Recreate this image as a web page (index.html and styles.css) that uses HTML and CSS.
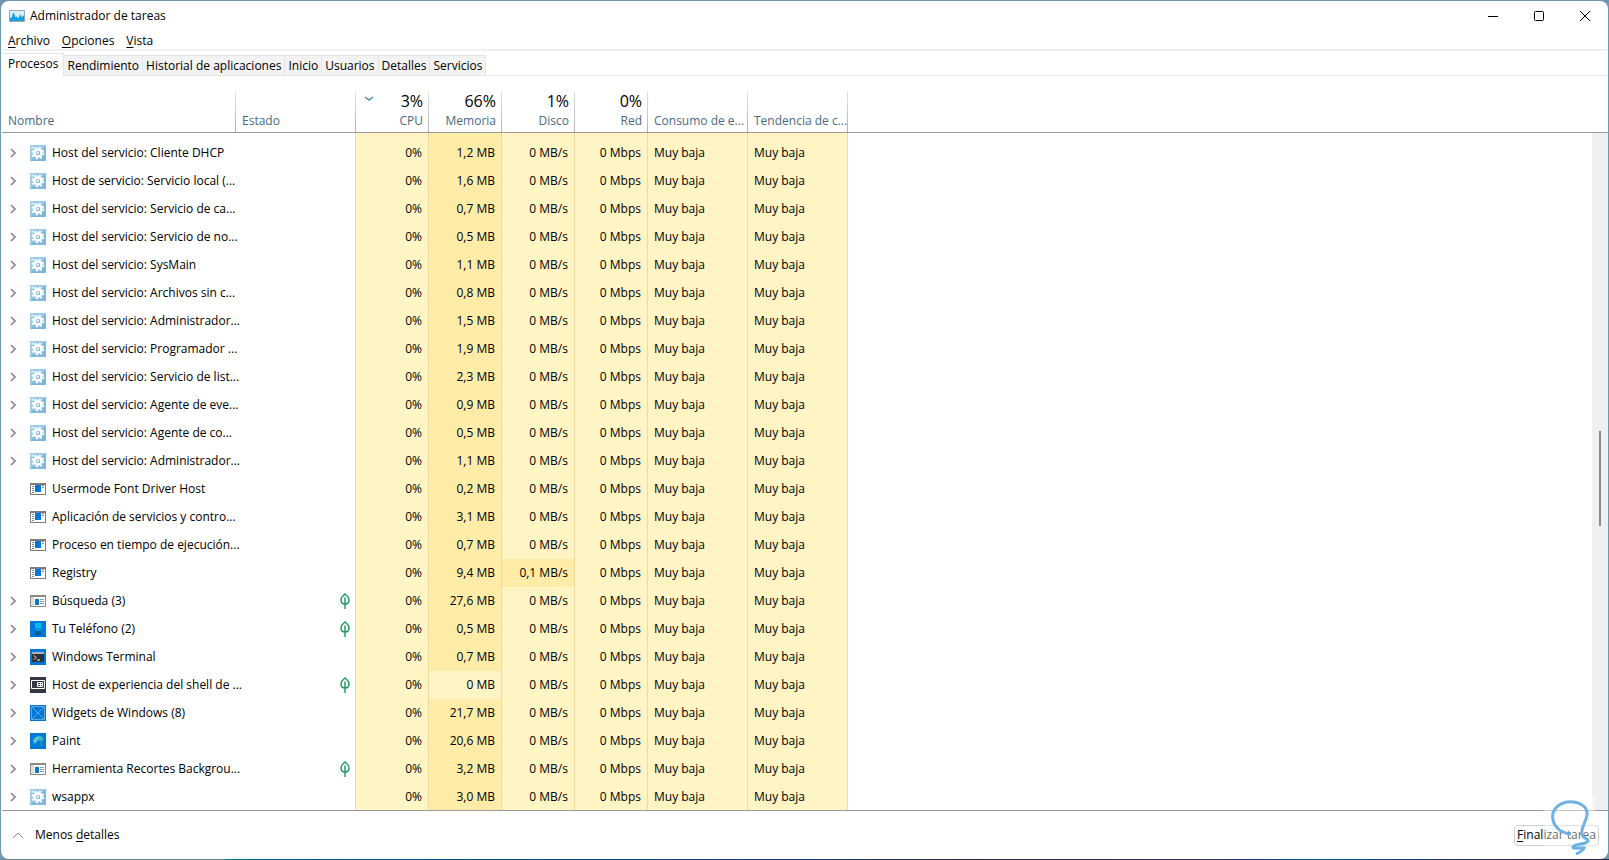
FILE: index.html
```html
<!DOCTYPE html>
<html lang="es">
<head>
    <meta charset="UTF-8">
    <title>Administrador de tareas</title>
    <link rel="stylesheet" href="styles.css">
</head>
<body>
    <svg class="defs" aria-hidden="true">
        <symbol id="i-gear" viewBox="0 0 16 16">
            <rect width="16" height="16" fill="#7fb6de"/>
            <path d="M0 0h16L0 16z" fill="#9ccbe9"/>
            <path d="M1 1h3v3H1z" fill="#c4e2f4"/>
            <circle cx="8" cy="8" r="5.4" fill="none" stroke="#fff" stroke-width="2" stroke-dasharray="2.12 2.12"/>
            <circle cx="8" cy="8" r="3.5" fill="none" stroke="#fff" stroke-width="2.6"/>
            <circle cx="8" cy="8" r="1" fill="#fff"/>
        </symbol>
        <symbol id="i-app" viewBox="0 0 16 16">
            <path d="M0 2h16v12H0z" fill="#7c7c7c"/>
            <path d="M1 4h14v9H1z" fill="#fff"/>
            <path d="M5 4h6v7H5z" fill="#0078d7"/>
            <path d="M2 5h2v1H2zM2 7h2v1H2zM2 9h2v1H2zM2 11h2v1H2zM12 4h2v1h-2zM12 6h2v1h-2z" fill="#888"/>
        </symbol>
        <symbol id="i-win" viewBox="0 0 16 16">
            <path d="M0 2h16v12H0z" fill="#8a8a8a"/>
            <path d="M1 4h14v9H1z" fill="#fff"/>
            <path d="M1 4h3v9H1z" fill="#ddd"/>
            <path d="M5 6h4v6H5z" fill="#0078d7"/>
            <path d="M10 6h4v1h-4zM10 8h4v1h-4zM10 10h4v1h-4z" fill="#999"/>
        </symbol>
        <symbol id="i-phone" viewBox="0 0 16 16">
            <rect width="16" height="16" fill="#0078d7"/>
            <path d="M5 2h6v5H5z" fill="#00bcf2"/>
            <path d="M5 7h6v3H5z" fill="#0099e0"/>
            <path d="M5 10h6v4H5z" fill="#005a9e"/>
        </symbol>
        <symbol id="i-term" viewBox="0 0 16 16">
            <rect width="16" height="16" fill="#0078d7"/>
            <path d="M2 4h12v9H2z" fill="#2d3238"/>
            <path d="M2 3h12v2H2z" fill="#aab4bc"/>
            <path d="M4 6.500l2 2-2 2M7 11h3" fill="none" stroke="#fff"/>
        </symbol>
        <symbol id="i-shell" viewBox="0 0 16 16">
            <rect width="16" height="16" fill="#333843"/>
            <path d="M1.500 3.500h13v8h-13z" fill="none" stroke="#fff"/>
            <path d="M7.500 5.500h5v4h-5zM10.500 5v5M8 7.500h5" fill="none" stroke="#fff"/>
        </symbol>
        <symbol id="i-widget" viewBox="0 0 16 16">
            <rect width="16" height="16" fill="#0078d7"/>
            <path d="M1.500 1.500h13v13h-13zM2 2l12 12M14 2L2 14" fill="none" stroke="#7fb4dd" stroke-width=".8"/>
        </symbol>
        <symbol id="i-paint" viewBox="0 0 16 16">
            <rect width="16" height="16" fill="#0078d7"/>
            <path d="M3 9c0-4 3-6 6-6 3 0 5 2 4 5l-3-1c-2 0-2 1-3 2-1 2-4 2-4 0z" fill="#31b7e8"/>
            <path d="M6 5h2v1H6zM4 7h2v1H4z" fill="#f6d14a"/>
            <path d="M9 4h2v2H9z" fill="#57c46a"/>
            <path d="M10 7l2 6" stroke="#3aa08c" stroke-width="1.500"/>
        </symbol>
        <symbol id="i-leaf" viewBox="0 0 10 16">
            <path d="M5 1C2.500 3 1 4.500 1 7s1.500 4 4 4 4-1.500 4-4-1.500-4-4-6zM5 4.500V16" fill="none" stroke="#15965a" stroke-width="1.400"/>
        </symbol>
        <symbol id="i-more" viewBox="0 0 6 10">
            <path d="M1 1l4 4-4 4" fill="none" stroke="#8a8a8a" stroke-width="1.700"/>
        </symbol>
    </svg>
    <div class="window">
        <header class="title">
            <svg class="logo" viewBox="0 0 16 12">
                <path d="M.5.5h15v11H.5z" fill="#d9f1fd" stroke="#9aa5ac"/>
                <path d="M1 11V8l2-1 1-4 1 0 1.500 4.500L7.500 6l1 2h1L11 4l1.500 3.500L14 5l1 2v4z" fill="#149de0"/>
            </svg>
            <h1>Administrador de tareas</h1>
            <div class="win-btns">
                <button type="button" aria-label="Minimizar"><svg viewBox="0 0 12 12"><path d="M1 6.500h10"/></svg></button>
                <button type="button" aria-label="Maximizar"><svg viewBox="0 0 12 12"><rect x="1.500" y="1.500" width="9" height="9" rx="1"/></svg></button>
                <button type="button" aria-label="Cerrar"><svg viewBox="0 0 12 12"><path d="M1 1l10 10M11 1L1 11"/></svg></button>
            </div>
        </header>
        <nav class="menu">
            <a href="#"><u>A</u>rchivo</a>
            <a href="#"><u>O</u>pciones</a>
            <a href="#"><u>V</u>ista</a>
        </nav>
        <div class="tabs" role="tablist">
            <button type="button" role="tab" class="active" aria-selected="true">Procesos</button>
            <button type="button" role="tab">Rendimiento</button>
            <button type="button" role="tab">Historial de aplicaciones</button>
            <button type="button" role="tab">Inicio</button>
            <button type="button" role="tab">Usuarios</button>
            <button type="button" role="tab">Detalles</button>
            <button type="button" role="tab">Servicios</button>
        </div>
        <main class="list">
            <div class="view">
                <table>
                    <colgroup>
                        <col class="c-name"><col class="c-state">
                        <col class="c-num"><col class="c-num"><col class="c-num"><col class="c-num">
                        <col class="c-power"><col class="c-power"><col>
                    </colgroup>
                    <thead>
                        <tr>
                            <th>Nombre</th>
                            <th>Estado</th>
                            <th class="num"><div class="total"><svg class="sort" viewBox="0 0 10 6"><path d="M1 1l4 3 4-3"/></svg><b>3%</b></div>CPU</th>
                            <th class="num"><div class="total"><b>66%</b></div>Memoria</th>
                            <th class="num"><div class="total"><b>1%</b></div>Disco</th>
                            <th class="num"><div class="total"><b>0%</b></div>Red</th>
                            <th>Consumo de e...</th>
                            <th>Tendencia de c...</th>
                            <td></td>
                        </tr>
                    </thead>
                    <tbody id="rows"></tbody>
                </table>
            </div>
            <div class="scroll"><div class="thumb"></div></div>
        </main>
        <footer class="bottom">
            <button type="button" class="less">
                <svg viewBox="0 0 12 8"><path d="M1 7l5-5 5 5"/></svg>
                <span>Menos <u>d</u>etalles</span>
            </button>
            <button type="button" class="end"><u>F</u>inalizar tarea</button>
            <svg class="mark" viewBox="0 0 52 58">
                <path d="M28 37C15 36 8 26 10 16 13 8 21 4 30 5c9 1 15 6 14 13-1 8-7 13-5 20 1 3 7 4 6 6-2 4-13 2-15 6 0 3 8 0 11 1-1 2-5 5-8 6"/>
            </svg>
        </footer>
    </div>
    <script>
        // icono, nombre, memoria, desplegable, hoja
        let procs = [
            ['gear', 'Host del servicio: Cliente DHCP', '1,2', 1],
            ['gear', 'Host de servicio: Servicio local (...', '1,6', 1],
            ['gear', 'Host del servicio: Servicio de ca...', '0,7', 1],
            ['gear', 'Host del servicio: Servicio de no...', '0,5', 1],
            ['gear', 'Host del servicio: SysMain', '1,1', 1],
            ['gear', 'Host del servicio: Archivos sin c...', '0,8', 1],
            ['gear', 'Host del servicio: Administrador...', '1,5', 1],
            ['gear', 'Host del servicio: Programador ...', '1,9', 1],
            ['gear', 'Host del servicio: Servicio de list...', '2,3', 1],
            ['gear', 'Host del servicio: Agente de eve...', '0,9', 1],
            ['gear', 'Host del servicio: Agente de co...', '0,5', 1],
            ['gear', 'Host del servicio: Administrador...', '1,1', 1],
            ['app', 'Usermode Font Driver Host', '0,2', 0],
            ['app', 'Aplicación de servicios y contro...', '3,1', 0],
            ['app', 'Proceso en tiempo de ejecución...', '0,7', 0],
            ['app', 'Registry', '9,4', 0],
            ['win', 'Búsqueda (3)', '27,6', 1, 1],
            ['phone', 'Tu Teléfono (2)', '0,5', 1, 1],
            ['term', 'Windows Terminal', '0,7', 1],
            ['shell', 'Host de experiencia del shell de ...', '0', 1, 1],
            ['widget', 'Widgets de Windows (8)', '21,7', 1],
            ['paint', 'Paint', '20,6', 1],
            ['win', 'Herramienta Recortes Backgrou...', '3,2', 1, 1],
            ['gear', 'wsappx', '3,0', 1]
        ];

        function icon(name, cls){
            return '<svg class="' + cls + '"><use href="#i-' + name + '"/></svg>';
        }

        // hueco bajo la cabecera
        let html = '<tr class="gap"><td></td><td></td><td class="heat"></td><td class="heat hot"></td>' +
            '<td class="heat"></td><td class="heat"></td><td class="heat"></td><td class="heat"></td><td></td></tr>';
        for(let i=0, len=procs.length; i<len; i++){
            let p = procs[i],
                disk = p[1] == 'Registry' ? '0,1' : '0';
            html += '<tr>' +
                '<td><div class="proc"><span class="arrow">' + (p[3] ? icon('more', 'more') : '') + '</span>' +
                icon(p[0], 'ico') + '<span>' + p[1] + '</span></div></td>' +
                '<td class="state">' + (p[4] ? icon('leaf', 'leaf') : '') + '</td>' +
                '<td class="num heat">0%</td>' +
                '<td class="num heat' + (p[2] != '0' ? ' hot' : '') + '">' + p[2] + ' MB</td>' +
                '<td class="num heat' + (disk != '0' ? ' hot' : '') + '">' + disk + ' MB/s</td>' +
                '<td class="num heat">0 Mbps</td>' +
                '<td class="heat">Muy baja</td>' +
                '<td class="heat">Muy baja</td>' +
                '<td></td></tr>';
        }
        document.getElementById('rows').innerHTML = html;
    </script>
</body>
</html>
```

FILE: styles.css
```css
*{margin:0;padding:0;box-sizing:border-box;}
html,body{height:100%;}
body{
    padding: 1px;
    overflow: hidden;
    background: linear-gradient(90deg,#6f8794 14%,#00788a 14%,#0a5a96 20%,#123f78 50%,#2a2a40 60%,#33306a 75%,#0a5a96 82%,#2b2250 95%) bottom / 100% 1px no-repeat #6f97ad;
    font: 12px/16px "Open Sans","Noto Sans",sans-serif;
    color: #000;
}
button{
    border: 0;
    background: none;
    font: inherit;
    color: inherit;
}
a{color:inherit;text-decoration:none;}
u{text-underline-offset:2px;}
.defs{
    position: absolute;
    width: 0;
    height: 0;
}
.window{
    display: flex;
    flex-direction: column;
    height: 100%;
    padding-left: 1px;
    background-color: #fff;
    border-radius: 8px;
    overflow: hidden;
}
/* titulo */
.title{
    display: flex;
    align-items: center;
    height: 29px;
    padding-left: 7px;
}
.logo{
    width: 16px;
    height: 12px;
    margin-right: 5px;
}
.title h1{
    flex: 1;
    font-size: 12px;
    font-weight: normal;
}
.win-btns{display:flex;}
.win-btns button{
    width: 46px;
    height: 28px;
}
.win-btns svg{
    width: 12px;
    height: 12px;
    fill: none;
    stroke: #000;
    vertical-align: middle;
}
.menu{
    display: flex;
    gap: 12px;
    height: 21px;
    padding: 3px 6px 0;
    border-bottom: 2px solid #f0f0f0;
}
/* pestañas */
.tabs{
    display: flex;
    align-items: flex-end;
    height: 25px;
    box-shadow: inset 0 -1px #e5e5e5;
}
.tabs button{
    height: 21px;
    padding: 0 3px;
    background-color: #f3f3f3;
    border: 1px solid #e5e5e5;
    border-left: 0;
}
.tabs .active{
    height: 23px;
    padding: 0 5px 3px 6px;
    background-color: #fff;
    border-bottom: 0;
}
/* lista */
.list{
    display: flex;
    flex: 1;
    min-height: 0;
    border-bottom: 1px solid #999;
}
.view{
    flex: 1;
    overflow: hidden;
}
table{
    width: 100%;
    table-layout: fixed;
    border-collapse: separate;
    border-spacing: 0;
}
.c-name{width:234px;}
.c-state{width:120px;}
.c-num{width:73px;}
.c-power{width:100px;}
thead tr{height:57px;}
thead th,
thead td{
    border-bottom: 1px solid #999;
}
th{
    padding: 0 4px 3px 6px;
    vertical-align: bottom;
    text-align: left;
    font-weight: normal;
    white-space: nowrap;
    color: #4a6984;
    background: linear-gradient(#e5e5e5,#b0b0b0) right bottom / 1px 41px no-repeat;
}
.num{
    padding-right: 6px;
    text-align: right;
}
.total{
    display: flex;
    align-items: center;
    height: 20px;
    margin-bottom: 2px;
    color: #000;
}
.total b{
    margin-left: auto;
    font-size: 16px;
    font-weight: normal;
}
.sort{
    width: 10px;
    height: 6px;
    margin: 0 0 4px 2px;
    fill: none;
    stroke: #4a8aa8;
    stroke-width: 1.5;
}
tbody tr{height:28px;}
tbody .gap{height:6px;}
tbody td{
    padding: 0 6px;
    white-space: nowrap;
}
tbody td:nth-child(2){
    padding-right: 5px;
    border-right: 1px solid #f0d9a0;
}
td.heat{
    background-color: #fff4c4;
    border-right: 1px solid #f0d9a0;
}
td.hot{background-color:#ffeca6;}
.proc{
    display: flex;
    align-items: center;
}
.arrow{
    flex: none;
    width: 22px;
    height: 16px;
    padding: 3px 2px 0;
}
.more{
    display: block;
    width: 6px;
    height: 10px;
}
.ico{
    flex: none;
    width: 16px;
    height: 16px;
    margin-right: 6px;
}
.leaf{
    display: block;
    width: 10px;
    height: 16px;
    margin-left: auto;
}
.scroll{
    width: 16px;
    margin-top: 56px;
    padding-top: 298px;
    background-color: #f0f0f0;
    border-top: 1px solid #999;
}
.thumb{
    width: 2px;
    height: 95px;
    margin-left: 7px;
    background-color: #8a8a8a;
}
/* pie */
.bottom{
    position: relative;
    display: flex;
    align-items: center;
    justify-content: space-between;
    height: 48px;
    padding: 0 9px 0 10px;
}
.less{
    display: flex;
    align-items: center;
    gap: 11px;
}
.less svg{
    width: 12px;
    height: 8px;
    fill: none;
    stroke: #888;
}
.end{
    height: 21px;
    padding: 0 2px;
    border: 1px solid #d0d0d0;
    border-radius: 4px;
}
.mark{
    position: absolute;
    right: 13px;
    bottom: 4px;
    width: 52px;
    height: 58px;
    background-color: rgba(255,255,255,.4);
    fill: none;
    stroke: #6fb1e3;
    stroke-width: 3;
    pointer-events: none;
}
```
